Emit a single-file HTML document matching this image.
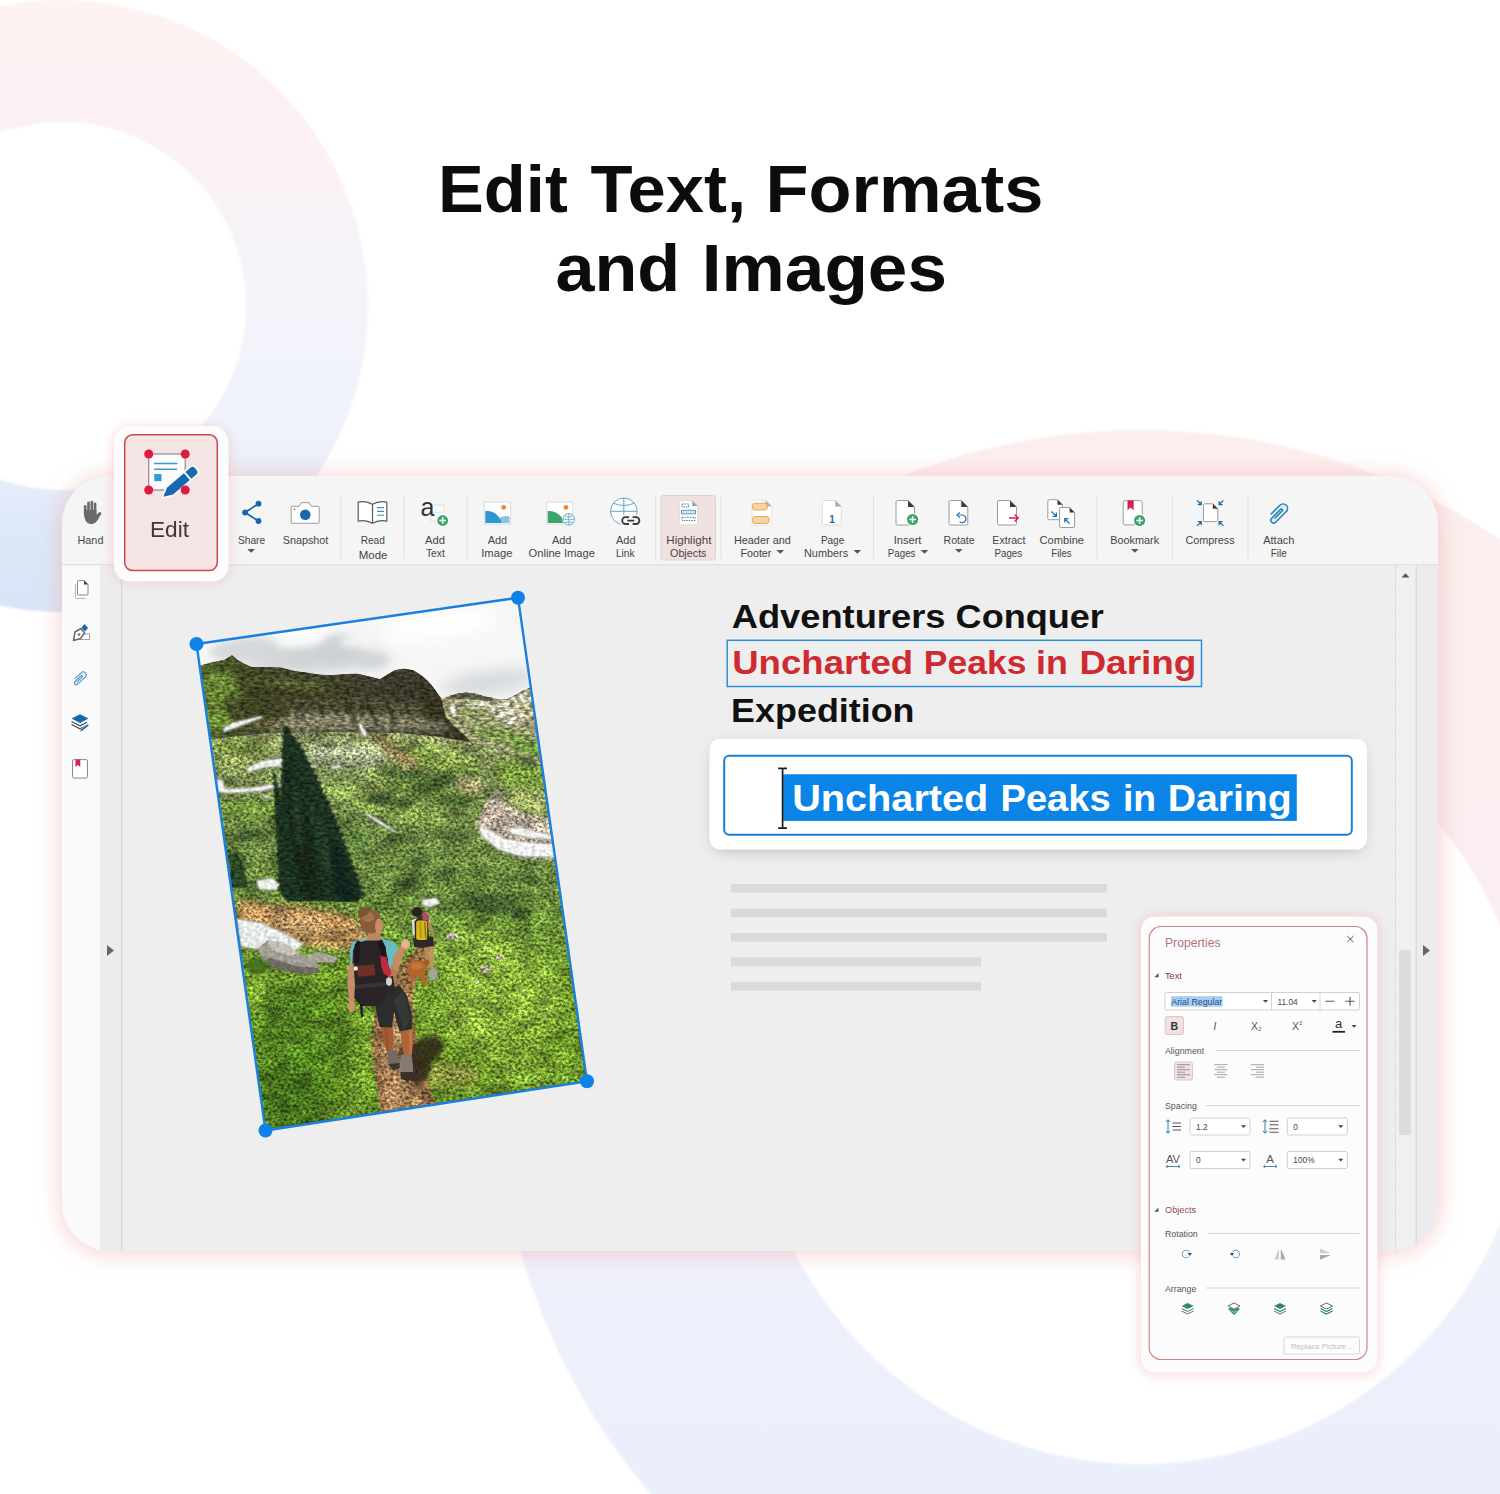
<!DOCTYPE html>
<html lang="en"><head><meta charset="utf-8"><title>Edit Text, Formats and Images</title>
<style>html,body{margin:0;padding:0;background:#fff;}body{width:1500px;height:1494px;overflow:hidden;font-family:"Liberation Sans",sans-serif;}svg{display:block;}</style></head>
<body>
<svg width="1500" height="1494" viewBox="0 0 1500 1494" font-family='"Liberation Sans", sans-serif'>

<defs>
<linearGradient id="ring1" x1="0" y1="0" x2="0" y2="1">
 <stop offset="0" stop-color="#fef2f2"/><stop offset="0.25" stop-color="#fbf1f3"/><stop offset="0.45" stop-color="#f4f4fa"/><stop offset="0.7" stop-color="#f0f3fb"/><stop offset="0.8" stop-color="#e4ecf9"/><stop offset="0.88" stop-color="#dce7f8"/><stop offset="1" stop-color="#d8e5f7"/>
</linearGradient>
<linearGradient id="ring2" x1="0" y1="0" x2="0" y2="1">
 <stop offset="0" stop-color="#fdeeee"/><stop offset="0.45" stop-color="#f9eef1"/><stop offset="0.62" stop-color="#eef1fa"/><stop offset="1" stop-color="#e8eefb"/>
</linearGradient>
<filter id="blur3" x="-10%" y="-10%" width="120%" height="120%"><feGaussianBlur stdDeviation="3"/></filter>
<filter id="blur1" x="-10%" y="-10%" width="120%" height="120%"><feGaussianBlur stdDeviation="1.2"/></filter>
<filter id="glow" x="-10%" y="-10%" width="120%" height="120%"><feGaussianBlur stdDeviation="11"/></filter>
<filter id="glow2" x="-20%" y="-20%" width="140%" height="140%"><feGaussianBlur stdDeviation="6"/></filter>
<filter id="cardsh" x="-10%" y="-30%" width="120%" height="160%"><feGaussianBlur stdDeviation="7"/></filter>
<clipPath id="winclip"><rect x="62" y="476" width="1376" height="775" rx="48"/></clipPath>
</defs>
<rect x="0" y="0" width="1500" height="1494" fill="#ffffff"/>
<path filter="url(#blur1)" fill="url(#ring1)" fill-rule="evenodd" d="M62 0 a306 306 0 1 0 0.01 0 Z M62 122 a184 184 0 1 1 -0.01 0 Z"/>
<path filter="url(#blur1)" fill="url(#ring2)" fill-rule="evenodd" d="M1141 430 a645 645 0 1 0 0.01 0 Z M1141 686 a389 389 0 1 1 -0.01 0 Z"/>
<text y="212" font-size="67" font-weight="bold" fill="#0c0c0c" xml:space="preserve"><tspan x="438.0" textLength="129.82" lengthAdjust="spacingAndGlyphs">Edit</tspan> <tspan x="590.6" textLength="155.51" lengthAdjust="spacingAndGlyphs">Text,</tspan> <tspan x="765.5" textLength="277.88" lengthAdjust="spacingAndGlyphs">Formats</tspan></text>
<text y="290.8" font-size="67" font-weight="bold" fill="#0c0c0c" xml:space="preserve"><tspan x="555.45" textLength="124.66" lengthAdjust="spacingAndGlyphs">and</tspan> <tspan x="701.85" textLength="245.15" lengthAdjust="spacingAndGlyphs">Images</tspan></text>
<rect x="60" y="476" width="1380" height="778" rx="50" fill="#f2a8a8" opacity="0.52" filter="url(#glow)"/>
<g clip-path="url(#winclip)">
<rect x="62" y="476" width="1376" height="775" fill="#eeeeee"/>
<rect x="62" y="476" width="1376" height="88" fill="#f5f5f5"/>
<rect x="62" y="564" width="1376" height="1.5" fill="#e2e2e2"/>
<rect x="62" y="565.5" width="39" height="700" fill="#fafafa"/>
<rect x="101" y="565.5" width="20" height="700" fill="#ececef"/>
<rect x="100.5" y="565.5" width="1" height="700" fill="#e4e4e8"/>
<rect x="121" y="565.5" width="1.2" height="700" fill="#d6d6da"/>
<rect x="1396" y="565.5" width="20" height="700" fill="#f0f0f0"/>
<line x1="1395.5" y1="566" x2="1395.5" y2="1251" stroke="#cfcfcf" stroke-width="1" stroke-dasharray="1.5 1.5"/>
<rect x="1416" y="565.5" width="22" height="700" fill="#ececef"/>
<rect x="1415.5" y="565.5" width="1.2" height="700" fill="#d9d9dc"/>
<rect x="1399" y="950" width="12" height="185" fill="#dcdcdc" rx="2"/>
<path d="M1401.500 577.500 l4 -4.200 l4 4.200 z" fill="#555"/>
<path d="M107 945 l7 5.5 l-7 5.5 z" fill="#666"/>
<path d="M1423 945 l7 5.5 l-7 5.5 z" fill="#666"/>
</g>
<text y="627.7" font-size="33" font-weight="bold" fill="#111111" xml:space="preserve"><tspan x="731.7" textLength="213.79" lengthAdjust="spacingAndGlyphs">Adventurers</tspan> <tspan x="955.61" textLength="148.22" lengthAdjust="spacingAndGlyphs">Conquer</tspan></text>
<rect x="727.2" y="640.3" width="474.3" height="46.2" fill="#eeeeee" stroke="#2b8fd6" stroke-width="1.5"/>
<text y="674.4" font-size="33" font-weight="bold" fill="#cf2a30" xml:space="preserve"><tspan x="732.19" textLength="180.9" lengthAdjust="spacingAndGlyphs">Uncharted</tspan> <tspan x="923.85" textLength="102.61" lengthAdjust="spacingAndGlyphs">Peaks</tspan> <tspan x="1036.13" textLength="31.83" lengthAdjust="spacingAndGlyphs">in</tspan> <tspan x="1079.46" textLength="116.95" lengthAdjust="spacingAndGlyphs">Daring</tspan></text>
<text y="721.8" font-size="33" font-weight="bold" fill="#111111" xml:space="preserve"><tspan x="731.12" textLength="183.43" lengthAdjust="spacingAndGlyphs">Expedition</tspan></text>
<rect x="712" y="744" width="652" height="108" rx="10" fill="#9a9a9a" opacity="0.5" filter="url(#cardsh)"/>
<rect x="709.5" y="739" width="657.5" height="110.5" fill="#ffffff" rx="10"/>
<rect x="724.2" y="755.7" width="627.6" height="79" fill="#ffffff" rx="5" stroke="#1b7fd3" stroke-width="2"/>
<rect x="783.2" y="774.3" width="513.6" height="46.6" fill="#0a84e6"/>
<text y="810.5" font-size="37" font-weight="bold" fill="#ffffff" xml:space="preserve"><tspan x="792.16" textLength="196.16" lengthAdjust="spacingAndGlyphs">Uncharted</tspan> <tspan x="1000.54" textLength="110.15" lengthAdjust="spacingAndGlyphs">Peaks</tspan> <tspan x="1122.98" textLength="33.13" lengthAdjust="spacingAndGlyphs">in</tspan> <tspan x="1167.68" textLength="124.01" lengthAdjust="spacingAndGlyphs">Daring</tspan></text>
<path d="M778.200 768.300 h3.400 q1 0 1 1 q0 -1 1 -1 h3.400 M782.600 769 v58.500 M778.200 828.200 h3.400 q1 0 1 -1 q0 1 1 1 h3.400" fill="none" stroke="#1a1a1a" stroke-width="1.700"/>
<rect x="731" y="884" width="376" height="8.6" fill="#dadada"/>
<rect x="731" y="908.5" width="376" height="8.6" fill="#dadada"/>
<rect x="731" y="933" width="376" height="8.6" fill="#dadada"/>
<rect x="731" y="957.5" width="250" height="8.6" fill="#dadada"/>
<rect x="731" y="982" width="250" height="8.6" fill="#dadada"/>
<path d="M75.500 584 v13.500 q0 1 1 1 h9" fill="none" stroke="#b5b5b5" stroke-width="1"/><path d="M78.500 580.500 h5.500 l4 4 v9.500 q0 1 -1 1 h-8.500 q-1 0 -1 -1 v-12.500 q0 -1 1 -1 z" fill="#fff" stroke="#8a8a8a" stroke-width="1"/><path d="M84 580.500 l4 4 h-4 z" fill="#3a3a3a"/>
<rect x="79.500" y="634" width="10" height="5.500" fill="#fff" stroke="#9a9a9a" stroke-width="0.900"/><path d="M73.500 640.500 l1.500 -8.500 l6 -3.500 l3.500 4.500 l-4 5.500 z" fill="#fff" stroke="#6a6a6a" stroke-width="1.500" stroke-linejoin="round"/><circle cx="79" cy="634.500" r="1.300" fill="#6a6a6a"/><path d="M81.500 627.500 l3 -3.500 l3.500 4 l-3 3.500 z" fill="#1767b0"/>
<g transform="translate(80 678) rotate(48)"><path d="M-3 4 v-8.500 a3 3 0 0 1 6 0 v10.500 a1.900 1.900 0 0 1 -3.800 0 v-8.500 a0.700 0.700 0 0 1 1.500 0 v7" fill="#eaf4fb" stroke="#4a8fbf" stroke-width="1" stroke-linecap="round"/></g>
<path d="M71.500 724.500 l8.500 4.300 l7 -3.600" fill="none" stroke="#4a4a4a" stroke-width="1.100"/><path d="M71.500 721.500 l8.500 4.300 l7 -3.600" fill="none" stroke="#4a4a4a" stroke-width="1.100"/><path d="M71.500 718.600 l8.500 -4.300 l8.500 4.300 l-8.500 4.300 z" fill="#1767b0"/><path d="M80.500 729.500 l7 -5.500 l1.600 1.600 l-7 5.500 l-2.400 0.500 z" fill="#1767b0" stroke="#fafafa" stroke-width="0.600"/>
<rect x="72.500" y="759.600" width="15" height="18.500" rx="1.500" fill="#fff" stroke="#8a8a8a" stroke-width="1"/><path d="M75.500 759.600 h4.800 v7.500 l-2.400 -2 l-2.400 2 z" fill="#d8224e"/>
<defs>
<clipPath id="pclip"><polygon points="196.5,644 518,597.7 587,1081.3 265.5,1130.5"/></clipPath>
<filter id="pb1" x="-30%" y="-30%" width="160%" height="160%"><feGaussianBlur stdDeviation="1"/></filter>
<filter id="pb2" x="-30%" y="-30%" width="160%" height="160%"><feGaussianBlur stdDeviation="2"/></filter>
<filter id="pb3" x="-40%" y="-40%" width="180%" height="180%"><feGaussianBlur stdDeviation="3.500"/></filter>
<filter id="pb8" x="-50%" y="-50%" width="200%" height="200%"><feGaussianBlur stdDeviation="8"/></filter>
<filter id="grain" x="0" y="0" width="100%" height="100%" color-interpolation-filters="sRGB">
<feTurbulence type="fractalNoise" baseFrequency="0.320 0.380" numOctaves="3" seed="7" result="t1"/>
<feColorMatrix in="t1" type="matrix" values="1.900 0.200 0 0 -0.520  1.700 0 0 0 -0.350  1.600 0 0.100 0 -0.350  0 0 0 0 1" result="n1"/>
<feTurbulence type="fractalNoise" baseFrequency="0.045 0.070" numOctaves="3" seed="31" result="t2"/>
<feColorMatrix in="t2" type="matrix" values="1.600 0 0 0 -0.300  1.600 0 0 0 -0.300  1.600 0 0 0 -0.300  0 0 0 0 1" result="n2"/>
<feComposite in="SourceGraphic" in2="n1" operator="arithmetic" k1="1" k2="0.500" k3="0" k4="0" result="c1"/>
<feComposite in="c1" in2="n2" operator="arithmetic" k1="0.500" k2="0.750" k3="0" k4="0" result="c2"/>
<feComposite in="c2" in2="SourceGraphic" operator="in"/>
</filter>
<filter id="grain2" x="0" y="0" width="100%" height="100%" color-interpolation-filters="sRGB">
<feTurbulence type="fractalNoise" baseFrequency="0.200 0.400" numOctaves="3" seed="3" result="t1"/>
<feColorMatrix in="t1" type="matrix" values="1.800 0 0 0 -0.400  1.800 0 0 0 -0.400  1.800 0 0 0 -0.400  0 0 0 0 1" result="n1"/>
<feComposite in="SourceGraphic" in2="n1" operator="arithmetic" k1="0.900" k2="0.550" k3="0" k4="0" result="c1"/>
<feComposite in="c1" in2="SourceGraphic" operator="in"/>
</filter>
<filter id="grain3" x="0" y="0" width="100%" height="100%" color-interpolation-filters="sRGB">
<feTurbulence type="fractalNoise" baseFrequency="0.250 0.300" numOctaves="2" seed="13" result="t1"/>
<feColorMatrix in="t1" type="matrix" values="1 0 0 0 -0.100  1 0 0 0 -0.100  1 0 0 0 -0.100  0 0 0 0 1" result="n1"/>
<feComposite in="SourceGraphic" in2="n1" operator="arithmetic" k1="0.450" k2="0.820" k3="0" k4="0" result="c1"/>
<feComposite in="c1" in2="SourceGraphic" operator="in"/>
</filter>
<linearGradient id="gmead" x1="0" y1="0" x2="0" y2="1"><stop offset="0" stop-color="#86945e"/><stop offset="0.200" stop-color="#6a8446"/><stop offset="0.420" stop-color="#65883c"/><stop offset="0.600" stop-color="#6f9a30"/><stop offset="1" stop-color="#628c28"/></linearGradient>
<linearGradient id="grock" x1="0" y1="0" x2="1" y2="0"><stop offset="0" stop-color="#566c30"/><stop offset="0.200" stop-color="#424728"/><stop offset="0.600" stop-color="#403e2d"/><stop offset="1" stop-color="#383527"/></linearGradient>
</defs>
<g clip-path="url(#pclip)">
<rect x="190" y="590" width="410" height="160" fill="#f6f6f6"/>
<ellipse cx="300" cy="662" rx="60" ry="12" fill="#d3d6d8" opacity="0.9" filter="url(#pb8)" transform="rotate(-8 300 662)"/>
<ellipse cx="250" cy="650" rx="40" ry="9" fill="#e2e3e4" filter="url(#pb3)" transform="rotate(-8 250 650)"/>
<ellipse cx="340" cy="648" rx="22" ry="14" fill="#d0d4d7" opacity="0.9" filter="url(#pb3)"/>
<ellipse cx="372" cy="660" rx="18" ry="8" fill="#d6d9db" opacity="0.9" filter="url(#pb3)"/>
<ellipse cx="490" cy="682" rx="50" ry="10" fill="#d2d5d8" filter="url(#pb8)" transform="rotate(-8 490 682)"/>
<ellipse cx="440" cy="625" rx="60" ry="14" fill="#ffffff" filter="url(#pb8)" transform="rotate(-8 440 625)"/>
<ellipse cx="300" cy="632" rx="30" ry="7" fill="#ffffff" filter="url(#pb3)" transform="rotate(-8 300 632)"/>
<ellipse cx="310" cy="656" rx="80" ry="10" fill="#cbcfd2" opacity="0.9" filter="url(#pb8)" transform="rotate(3 310 656)"/>
<ellipse cx="240" cy="648" rx="30" ry="8" fill="#d5d8da" opacity="0.9" filter="url(#pb3)" transform="rotate(-6 240 648)"/>
<ellipse cx="300" cy="640" rx="26" ry="6" fill="#fbfbfb" opacity="0.9" filter="url(#pb3)" transform="rotate(-8 300 640)"/>
<ellipse cx="360" cy="640" rx="20" ry="7" fill="#f4f4f4" opacity="0.9" filter="url(#pb3)" transform="rotate(-8 360 640)"/>
<g filter="url(#grain2)">
<polygon points="438,700 449,696 458,693.5 466,692.5 475,693.5 485,696.5 494,698 500,699.5 507,699 515,695 522,691 530,687.5 545,684 545,770 460,760 438,715" fill="#9d9b76"/>
<polygon points="449,696 458,693.5 466,692.5 475,693.5 485,696.5 494,698 490,701 470,699 455,699" fill="#5c5b48"/>
<ellipse cx="470" cy="712" rx="16" ry="9" fill="#8c9460" opacity="0.9" filter="url(#pb3)"/>
<ellipse cx="520" cy="712" rx="18" ry="10" fill="#b9b38c" opacity="0.9" filter="url(#pb3)"/>
<ellipse cx="500" cy="735" rx="30" ry="8" fill="#7f9a50" filter="url(#pb3)" transform="rotate(10 500 735)"/>
<ellipse cx="530" cy="748" rx="20" ry="8" fill="#6f9840" filter="url(#pb3)" transform="rotate(10 530 748)"/>
<polygon points="451,707 456,705 458,713 453,716" fill="#eef0ea" filter="url(#pb1)"/>
<polygon points="466,703 490,702 492,705 472,707" fill="#eef0ea" filter="url(#pb1)"/>
<polygon points="489,710 508,701 511,703 493,713" fill="#eef0ea" filter="url(#pb1)"/>
<polygon points="497,716 516,706 518,708 500,719" fill="#eef0ea" filter="url(#pb1)"/>
<polygon points="512,700 526,692 528,694 515,702" fill="#eef0ea" filter="url(#pb1)"/>
<polygon points="505,722 522,713 524,715 508,725" fill="#eef0ea" filter="url(#pb1)"/>
<polygon points="520,703 531,697 532,700 522,706" fill="#eef0ea" filter="url(#pb1)"/>
<polygon points="190,668 201.5,665 213,662 225,659.5 232,655 238,660 245,664 252,667 265,667 281,667.5 295,671 307,672.5 320,674.5 332,675 345,674 357,673.5 368,676 380,679 388,674 395,670 404,668.5 413,670 421,675 428,681 434,688 441,698 446,717 455,727 468,738 470,742 440,737 400,733 330,732 270,733 230,737 190,742" fill="url(#grock)"/>
<ellipse cx="222" cy="690" rx="22" ry="18" fill="#6d8c38" opacity="0.95" filter="url(#pb3)"/>
<ellipse cx="215" cy="720" rx="18" ry="10" fill="#76983c" opacity="0.9" filter="url(#pb3)"/>
<ellipse cx="262" cy="683" rx="30" ry="9" fill="#4a4e2c" opacity="0.9" filter="url(#pb3)" transform="rotate(5 262 683)"/>
<ellipse cx="300" cy="686" rx="30" ry="5" fill="#6a7438" opacity="0.7" filter="url(#pb3)" transform="rotate(6 300 686)"/>
<ellipse cx="330" cy="702" rx="50" ry="5" fill="#77745a" opacity="0.7" filter="url(#pb3)" transform="rotate(3 330 702)"/>
<ellipse cx="360" cy="718" rx="60" ry="5" fill="#827d64" opacity="0.75" filter="url(#pb3)" transform="rotate(2 360 718)"/>
<ellipse cx="410" cy="690" rx="18" ry="14" fill="#3b392a" opacity="0.85" filter="url(#pb3)"/>
<ellipse cx="400" cy="710" rx="30" ry="5" fill="#64614a" opacity="0.7" filter="url(#pb3)"/>
<ellipse cx="290" cy="725" rx="50" ry="4" fill="#8a7e58" opacity="0.7" filter="url(#pb3)"/>
<ellipse cx="440" cy="725" rx="14" ry="6" fill="#4a4434" opacity="0.9" filter="url(#pb3)" transform="rotate(35 440 725)"/>
<polygon points="292,711 340,712 400,714 436,718 448,731 400,731 300,731 270,729" fill="#8a866c" filter="url(#pb3)" opacity="0.800"/>
<polygon points="300,700 350,701 420,704 432,710 380,709 320,707" fill="#6a6750" filter="url(#pb3)" opacity="0.700"/>
<ellipse cx="300" cy="695" rx="70" ry="5" fill="#35341f" opacity="0.7" filter="url(#pb3)" transform="rotate(4 300 695)"/>
<ellipse cx="350" cy="708" rx="60" ry="4" fill="#33301f" opacity="0.7" filter="url(#pb3)" transform="rotate(3 350 708)"/>
<ellipse cx="250" cy="705" rx="30" ry="8" fill="#3c4224" opacity="0.7" filter="url(#pb3)" transform="rotate(8 250 705)"/>
<ellipse cx="430" cy="708" rx="10" ry="14" fill="#35321f" opacity="0.8" filter="url(#pb3)" transform="rotate(-20 430 708)"/>
<path d="M345 698 L357 724" stroke="#24221a" stroke-width="2.6" opacity="0.850" filter="url(#pb1)"/>
<path d="M366 700 L378 727" stroke="#24221a" stroke-width="2.6" opacity="0.850" filter="url(#pb1)"/>
<path d="M386 702 L397 726" stroke="#24221a" stroke-width="2.2" opacity="0.850" filter="url(#pb1)"/>
<path d="M318 703 L324 718" stroke="#24221a" stroke-width="1.8" opacity="0.850" filter="url(#pb1)"/>
<path d="M226 700 L232 716" stroke="#24221a" stroke-width="1.8" opacity="0.850" filter="url(#pb1)"/>
<path d="M240 678 L262 672" stroke="#24221a" stroke-width="1.5" opacity="0.850" filter="url(#pb1)"/>
<path d="M405 704 L414 722" stroke="#24221a" stroke-width="1.8" opacity="0.850" filter="url(#pb1)"/>
<path d="M300 706 L305 720" stroke="#24221a" stroke-width="1.5" opacity="0.850" filter="url(#pb1)"/>
</g>
<g filter="url(#grain)">
<polygon points="190,742 230,737 270,733 330,732 400,733 440,737 470,742 500,750 545,768 600,1000 600,1140 190,1140" fill="url(#gmead)"/>
<ellipse cx="345" cy="755" rx="42" ry="13" fill="#a9b793" opacity="0.9" filter="url(#pb3)" transform="rotate(4 345 755)"/>
<ellipse cx="392" cy="750" rx="24" ry="5" fill="#8a7350" opacity="0.9" filter="url(#pb3)" transform="rotate(38 392 750)"/>
<ellipse cx="240" cy="748" rx="30" ry="9" fill="#7d9a46" opacity="0.9" filter="url(#pb3)"/>
<ellipse cx="235" cy="765" rx="26" ry="8" fill="#93a860" opacity="0.8" filter="url(#pb3)"/>
<ellipse cx="440" cy="760" rx="40" ry="12" fill="#7c9c44" opacity="0.9" filter="url(#pb3)" transform="rotate(14 440 760)"/>
<ellipse cx="420" cy="790" rx="50" ry="12" fill="#6c8a40" opacity="0.8" filter="url(#pb3)" transform="rotate(18 420 790)"/>
<ellipse cx="520" cy="775" rx="26" ry="14" fill="#7aa040" opacity="0.9" filter="url(#pb3)" transform="rotate(14 520 775)"/>
<ellipse cx="400" cy="812" rx="50" ry="10" fill="#86a84e" opacity="0.8" filter="url(#pb3)" transform="rotate(14 400 812)"/>
<ellipse cx="330" cy="790" rx="30" ry="8" fill="#8eaa58" opacity="0.8" filter="url(#pb3)"/>
<ellipse cx="250" cy="810" rx="30" ry="10" fill="#6a9238" opacity="0.8" filter="url(#pb3)"/>
<ellipse cx="405" cy="775" rx="16" ry="5" fill="#38552a" opacity="0.7" filter="url(#pb2)"/>
<ellipse cx="430" cy="785" rx="20" ry="6" fill="#38552a" opacity="0.7" filter="url(#pb2)"/>
<ellipse cx="380" cy="800" rx="14" ry="5" fill="#38552a" opacity="0.7" filter="url(#pb2)"/>
<ellipse cx="455" cy="800" rx="18" ry="6" fill="#38552a" opacity="0.7" filter="url(#pb2)"/>
<ellipse cx="470" cy="775" rx="10" ry="4" fill="#38552a" opacity="0.7" filter="url(#pb2)"/>
<ellipse cx="250" cy="835" rx="14" ry="6" fill="#38552a" opacity="0.7" filter="url(#pb2)"/>
<ellipse cx="232" cy="860" rx="12" ry="10" fill="#38552a" opacity="0.7" filter="url(#pb2)"/>
<ellipse cx="395" cy="840" rx="10" ry="5" fill="#38552a" opacity="0.7" filter="url(#pb2)"/>
<ellipse cx="420" cy="862" rx="12" ry="6" fill="#38552a" opacity="0.7" filter="url(#pb2)"/>
<ellipse cx="495" cy="905" rx="22" ry="10" fill="#38552a" opacity="0.7" filter="url(#pb2)"/>
<ellipse cx="470" cy="898" rx="10" ry="6" fill="#38552a" opacity="0.7" filter="url(#pb2)"/>
<ellipse cx="520" cy="915" rx="10" ry="6" fill="#38552a" opacity="0.7" filter="url(#pb2)"/>
<ellipse cx="400" cy="885" rx="10" ry="8" fill="#38552a" opacity="0.7" filter="url(#pb2)"/>
<ellipse cx="445" cy="870" rx="12" ry="5" fill="#38552a" opacity="0.7" filter="url(#pb2)"/>
<ellipse cx="530" cy="880" rx="10" ry="5" fill="#38552a" opacity="0.7" filter="url(#pb2)"/>
<ellipse cx="330" cy="745" rx="6" ry="3" fill="#38552a" opacity="0.7" filter="url(#pb2)"/>
<ellipse cx="300" cy="790" rx="10" ry="4" fill="#38552a" opacity="0.7" filter="url(#pb2)"/>
<polygon points="497,788 504,800 520,811 540,816 560,818 562,860 520,858 490,843 477,826 484,806" fill="#b6ae9c" filter="url(#pb2)"/>
<ellipse cx="530" cy="800" rx="26" ry="10" fill="#9fae68" opacity="0.9" filter="url(#pb3)" transform="rotate(12 530 800)"/>
<ellipse cx="407" cy="760" rx="14" ry="6" fill="#a08a60" opacity="0.85" filter="url(#pb3)" transform="rotate(32 407 760)"/>
<ellipse cx="470" cy="785" rx="13" ry="7" fill="#a59572" opacity="0.8" filter="url(#pb3)" transform="rotate(10 470 785)"/>
<ellipse cx="445" cy="752" rx="30" ry="6" fill="#8fa85a" opacity="0.8" filter="url(#pb3)" transform="rotate(16 445 752)"/>
<ellipse cx="390" cy="802" rx="24" ry="5" fill="#33492a" opacity="0.65" filter="url(#pb2)" transform="rotate(8 390 802)"/>
<ellipse cx="435" cy="776" rx="22" ry="7" fill="#3a4f2c" opacity="0.55" filter="url(#pb2)" transform="rotate(12 435 776)"/>
<ellipse cx="525" cy="762" rx="13" ry="5" fill="#3a4f2c" opacity="0.6" filter="url(#pb2)" transform="rotate(8 525 762)"/>
<ellipse cx="490" cy="904" rx="24" ry="9" fill="#3a512a" opacity="0.55" filter="url(#pb2)" transform="rotate(4 490 904)"/>
<ellipse cx="410" cy="886" rx="10" ry="9" fill="#3a512a" opacity="0.55" filter="url(#pb2)"/>
<ellipse cx="350" cy="842" rx="18" ry="10" fill="#55803a" opacity="0.6" filter="url(#pb3)"/>
<polygon points="236,900 300,906 350,915 372,935 356,950 310,946 270,942 240,930" fill="#b08c58" filter="url(#pb3)"/>
<ellipse cx="300" cy="925" rx="30" ry="8" fill="#b39868" opacity="0.8" filter="url(#pb3)" transform="rotate(8 300 925)"/>
<polygon points="384,1120 376,1080 372,1040 376,1010 388,985 402,965 416,950 428,940 434,944 424,958 416,975 412,1000 414,1030 420,1060 430,1090 436,1110" fill="#8c6c46" filter="url(#pb1)"/>
<polygon points="386,1110 382,1070 382,1040 388,1015 398,1000 406,1010 404,1040 410,1070 420,1100" fill="#a58258" filter="url(#pb2)"/>
<ellipse cx="300" cy="1040" rx="50" ry="60" fill="#4f7e22" opacity="0.9" filter="url(#pb8)"/>
<ellipse cx="290" cy="1100" rx="40" ry="30" fill="#416e1c" opacity="0.85" filter="url(#pb8)"/>
<ellipse cx="500" cy="1000" rx="60" ry="50" fill="#86ae3e" opacity="0.9" filter="url(#pb8)"/>
<ellipse cx="480" cy="950" rx="50" ry="20" fill="#88b042" opacity="0.8" filter="url(#pb8)"/>
<ellipse cx="520" cy="1060" rx="40" ry="25" fill="#78a234" opacity="0.8" filter="url(#pb8)"/>
<ellipse cx="330" cy="985" rx="20" ry="14" fill="#5f8a28" opacity="0.8" filter="url(#pb3)"/>
<ellipse cx="450" cy="1075" rx="30" ry="12" fill="#9c8a52" opacity="0.5" filter="url(#pb3)"/>
<polygon points="384,1125 376,1080 372,1040 376,1010 388,985 402,965 416,950 428,940 434,944 424,958 416,975 412,1000 414,1030 420,1060 430,1090 438,1115" fill="#8c6c46" filter="url(#pb1)"/>
<polygon points="388,1115 382,1070 382,1040 388,1015 398,1000 406,1010 404,1040 410,1070 422,1105" fill="#a5845a" filter="url(#pb2)"/>
<polygon points="445,934 452,932 459,935 456,940 447,939" fill="#aaa69c"/>
<polygon points="480,968 486,965 491,968 488,973 481,972" fill="#aaa69c"/>
<polygon points="496,956 503,955 504,959 497,960" fill="#aaa69c"/>
<polygon points="474,980 478,979 479,983 475,984" fill="#aaa69c"/>
</g>
<g filter="url(#grain3)">
<polygon points="478,826 490,829 505,838 530,842 556,843 556,858 520,857 497,850 480,835" fill="#f1f2ef" filter="url(#pb1)"/>
<polygon points="504,828 520,826 540,832 556,834 556,841 530,839 512,835" fill="#eceee9" filter="url(#pb1)"/>
<polygon points="222,728 232,722 262,715 264,718 240,727 224,733" fill="#eef0ec" filter="url(#pb1)"/>
<polygon points="245,768 262,760 284,757 300,762 318,765 318,768 290,767 266,768 248,773" fill="#eef0ec" filter="url(#pb1)"/>
<polygon points="214,779 222,778 226,788 252,787 280,782 288,784 262,792 230,794 216,793" fill="#eef0ec" filter="url(#pb1)"/>
<polygon points="357,723 361,722 367,732 368,738 362,736" fill="#eef0ec" filter="url(#pb1)"/>
<polygon points="330,766 340,764 342,768 332,770" fill="#eef0ec" filter="url(#pb1)"/>
<polygon points="366,812 380,820 398,832 396,834 378,824 365,815" fill="#eef0ec" filter="url(#pb1)"/>
<polygon points="421,899 437,897 441,904 430,908 422,906" fill="#eef0ec" filter="url(#pb1)"/>
<polygon points="438,741 448,745 447,747 437,743" fill="#eef0ec" filter="url(#pb1)"/>
<polygon points="256,880 272,877 281,885 276,891 258,890" fill="#eef0ec" filter="url(#pb1)"/>
<polygon points="262,795 270,794 271,798 263,799" fill="#eef0ec" filter="url(#pb1)"/>
<polygon points="236,918 262,922 290,935 305,944 296,951 262,951 240,947" fill="#e6eae8" filter="url(#pb1)"/>
<polygon points="258,948 268,940 284,943 300,953 318,964 320,973 300,974 280,970 262,962" fill="#a39e94"/>
<polygon points="268,940 284,943 300,953 290,956 272,950" fill="#c4c0b6"/>
<polygon points="262,962 280,970 300,974 320,973 318,968 296,966 270,958" fill="#6f6a60"/>
<polygon points="305,954 322,952 338,958 334,963 312,962" fill="#aaa69a"/>
<ellipse cx="257" cy="966" rx="12" ry="9" fill="#4e7e22" opacity="0.9" filter="url(#pb2)"/>
</g>
<g filter="url(#grain2)">
<polygon points="236,850 241,862 246,876 248,888 228,888 230,872" fill="#2b4628" filter="url(#pb1)"/>
<polygon points="273.5,771 277.3,777.5 275.3,780.4 279.3,784.0 277.2,786.9 281.2,790.5 279.0,793.4 283.0,797.0 280.7,799.9 285.6,803.5 282.3,806.4 286.9,810.0 283.8,812.9 287.7,816.5 285.3,819.4 289.5,823.0 286.8,825.9 291.9,829.5 288.2,832.4 292.8,836.0 289.6,838.9 294.7,842.5 291.0,845.4 296.8,849.0 292.3,851.9 299.1,855.5 293.7,858.4 300.6,862.0 295.0,864.9 300.1,868.5 296.3,871.4 303.1,875.0 297.6,877.9 305.1,881.5 298.9,884.4 306.2,888.0 300.2,890.9 296.2,892 285.7,891 281.7,890.9 276.4,888.0 281.2,884.4 276.8,881.5 280.8,877.9 274.7,875.0 280.3,871.4 277.4,868.5 279.8,864.9 274.9,862.0 279.4,858.4 274.2,855.5 278.9,851.9 276.2,849.0 278.5,845.4 275.5,842.5 278.0,838.9 275.0,836.0 277.6,832.4 273.5,829.5 277.1,825.9 274.8,823.0 276.7,819.4 272.8,816.5 276.3,812.9 273.6,810.0 275.9,806.4 273.3,803.5 275.5,799.9 272.6,797.0 275.2,793.4 272.7,790.5 274.8,786.9 271.8,784.0 274.6,780.4 272.3,777.5" fill="#1f3522" filter="url(#pb1)"/>
<polygon points="284,724.5 292.1,731.0 290.4,733.9 297.0,737.5 295.1,740.4 301.6,744.0 299.3,746.9 306.0,750.5 303.0,753.4 308.8,757.0 306.6,759.9 312.3,763.5 309.9,766.4 315.3,770.0 313.1,772.9 319.9,776.5 316.2,779.4 322.8,783.0 319.2,785.9 324.6,789.5 322.1,792.4 328.4,796.0 324.9,798.9 331.8,802.5 327.6,805.4 332.9,809.0 330.4,811.9 337.0,815.5 333.0,818.4 338.5,822.0 335.6,824.9 340.9,828.5 338.2,831.4 345.5,835.0 340.7,837.9 346.6,841.5 343.2,844.4 349.9,848.0 345.6,850.9 353.3,854.5 348.0,857.4 354.5,861.0 350.4,863.9 357.0,867.5 352.8,870.4 359.0,874.0 355.1,876.9 360.6,880.5 357.4,883.4 364.9,887.0 359.7,889.9 367.0,893.5 362.0,896.4 358.0,902 287.0,901 283.0,896.4 278.9,893.5 282.9,889.9 279.7,887.0 282.8,883.4 277.2,880.5 282.8,876.9 279.3,874.0 282.7,870.4 278.0,867.5 282.7,863.9 278.3,861.0 282.6,857.4 277.3,854.5 282.6,850.9 277.3,848.0 282.6,844.4 278.4,841.5 282.5,837.9 277.5,835.0 282.5,831.4 278.8,828.5 282.5,824.9 278.8,822.0 282.5,818.4 278.7,815.5 282.5,811.9 278.2,809.0 282.5,805.4 278.6,802.5 282.5,798.9 279.7,796.0 282.6,792.4 278.8,789.5 282.6,785.9 279.0,783.0 282.7,779.4 280.2,776.5 282.8,772.9 280.5,770.0 282.9,766.4 280.1,763.5 283.0,759.9 280.0,757.0 283.2,753.4 280.1,750.5 283.4,746.9 281.5,744.0 283.7,740.4 281.5,737.5 284.1,733.9 282.2,731.0" fill="#1b3020" filter="url(#pb1)"/>
<polygon points="288,760 298,790 308,830 316,870 320,897 303,893 294,850 286,800" fill="#122418" filter="url(#pb2)" opacity="0.800"/>
<polygon points="328,830 343,860 354,890 354,902 338,900 332,870" fill="#10201a" filter="url(#pb2)" opacity="0.800"/>
<polygon points="292,770 300,800 304,840 298,850 292,810" fill="#2e4a30" filter="url(#pb2)" opacity="0.600"/>
<polygon points="312,800 324,830 334,870 328,880 318,840" fill="#2c462e" filter="url(#pb2)" opacity="0.550"/>
</g>
<polygon points="424,946 428.5,945 430,957 429.5,968 426.5,968.5 425,957" fill="#b88a58"/>
<polygon points="429,946 433,945.5 434,957 433.5,968 430.8,968.5 430,957" fill="#c09460"/>
<polygon points="413,938 433,936.5 434,946 422,948 414,947" fill="#2e2826"/>
<polygon points="411.7,920 416,918.5 418,934 413,935" fill="#e4e0dc"/>
<polygon points="414.5,921 419,918.5 427.5,919 429,938 427.5,941 417,941.5 415,938" fill="#2e2a22"/>
<rect x="416.2" y="920.5" width="11" height="19.5" fill="#d9b922" rx="2.5"/>
<polygon points="418.5,922 421.5,921.5 422.5,938 419.5,938.5" fill="#bfa018"/>
<polygon points="424,922 425.5,922 426.5,938 425,938" fill="#8a7414"/>
<polygon points="427.7,921 431,923 434.5,934 433,936 430,930 428.5,927" fill="#b8845c"/>
<polygon points="421,913 426,912.5 429.5,916 429,921 423,920" fill="#b04a6a"/>
<ellipse cx="417" cy="912" rx="5.3" ry="5" fill="#2a2220"/>
<ellipse cx="420" cy="917" rx="2.5" ry="2" fill="#3a2a24"/>
<polygon points="429,969 434,967 438,972 437,979 431,981 428,976" fill="#aaa59a" filter="url(#pb1)"/>
<polygon points="407.6,964 412,961 420,961 425,960.5 428,963 427,968 425,972 425.5,980 426.5,986 423.5,986.5 421.5,979 418,976.5 413.5,976 413.5,983 411.5,983.5 410,977 408,971" fill="#b4642c"/>
<ellipse cx="417" cy="966" rx="6" ry="3.5" fill="#cc7c3a" opacity="0.9" filter="url(#pb1)"/>
<polygon points="424,960.5 428,959.5 430,963 427,966 424,964" fill="#a85824"/>
<polygon points="396,1052 408,1046 424,1037 436,1036 444,1042 442,1052 432,1062 430,1076 420,1084 410,1082 412,1066 402,1062" fill="#2a2416" filter="url(#pb2)" opacity="0.820"/>
<polygon points="380.5,1024 392.5,1025 393.5,1040 393,1052 387,1052.5 383,1040" fill="#a35c34"/>
<polygon points="400,1027 412.5,1026 413,1042 411.5,1056 404,1056.5 401.5,1042" fill="#ad6438"/>
<polygon points="384,1028 387,1028 389,1050 387,1051" fill="#8a4a28" opacity="0.600"/>
<polygon points="409,1030 412,1029 412,1054 409.5,1055" fill="#c88050" opacity="0.700"/>
<polygon points="387,1050.5 395.5,1050 399,1060 399.5,1068 393,1070 388.5,1066 387.5,1058" fill="#746a62"/>
<polygon points="401,1054.5 411.5,1054.5 413,1066 413,1077 408,1081 401,1078 400,1066" fill="#857b72"/>
<polygon points="400.5,1072 413,1072 413,1078 408,1081.5 401,1079" fill="#37312c"/>
<polygon points="388.5,1064 399.5,1063 399.5,1068.5 393,1070.5" fill="#3d3631"/>
<polygon points="374,990 400,986 407,996 411.5,1012 412,1029 399.5,1031.5 394,1012 392,1027.5 379.5,1027 376,1010" fill="#2b2e2c"/>
<polygon points="394,1000 402,992 407,1000 410,1020 404,1030" fill="#3a3e3a" opacity="0.700"/>
<polygon points="350,950 353,942 362,939 374,938.5 386,939.5 395,943 399.5,952 399,961 392,964 388,990 366,992 356,975 350.5,965" fill="#69bcc2"/>
<polygon points="393,958 398,950 402,942 405,939.5 409,941 409.5,946 405,951 401,962 397,972 392,968" fill="#c48c64"/>
<ellipse cx="405.5" cy="944" rx="4.5" ry="4.5" fill="#ddb48c"/>
<polygon points="392,966 397,972 395,984 390,986 388,976" fill="#b87c54"/>
<polygon points="368,932 380,931 381,940 367,940.5" fill="#bc8660"/>
<ellipse cx="370.5" cy="921.5" rx="10.5" ry="12" fill="#8c5c3a"/>
<ellipse cx="379" cy="926" rx="4" ry="7.5" fill="#c48e68"/>
<ellipse cx="368" cy="917" rx="6" ry="5" fill="#a87a52" opacity="0.8"/>
<ellipse cx="363.5" cy="912" rx="6" ry="4.2" fill="#80522f" transform="rotate(-20 363.5 912)"/>
<polygon points="353,950 357,943 366,940.5 378,940.5 385,946 388,960 388.5,985 386,1001 378,1006.5 361,1006 354,998 352,975" fill="#2b2426"/>
<polygon points="354.5,945 357.5,940.5 360.5,941.5 359,962 355,964" fill="#1c1819"/>
<polygon points="377,941 382,939.5 386,948 385,964 380.5,952" fill="#1c1819"/>
<polygon points="356.8,966 374,964.5 375.5,975 358,977" fill="#6e3029"/>
<polygon points="354,985 386,982 386,986 354,989" fill="#3b3436"/>
<ellipse cx="355.6" cy="968.5" rx="2.3" ry="2.3" fill="#efe9e6"/>
<polygon points="380.5,956 386,957 391.5,973 389,977 384,974 381,966" fill="#c22a3c"/>
<polygon points="385,978 393,976 395.5,992 390,996 386,992" fill="#2a282a"/>
<ellipse cx="389" cy="981.5" rx="3" ry="4.2" fill="#cfd6cc"/>
<polygon points="348.5,966 353.5,963 355,985 354,1001 349.5,1003 347.5,988" fill="#c48e68"/>
<ellipse cx="351.5" cy="1006.5" rx="3.6" ry="5.5" fill="#c8946c"/>
<polygon points="360,1004 362.5,1004 363,1017 361,1017" fill="#1a1a1a"/>
</g>
<polygon points="196.5,644 518,597.7 587,1081.3 265.5,1130.5" fill="none" stroke="#1a80dc" stroke-width="2.400" stroke-linejoin="round"/>
<circle cx="196.5" cy="644" r="7" fill="#0d83ea"/>
<circle cx="518" cy="597.7" r="7" fill="#0d83ea"/>
<circle cx="587" cy="1081.3" r="7" fill="#0d83ea"/>
<circle cx="265.5" cy="1130.5" r="7" fill="#0d83ea"/>
<g clip-path="url(#winclip)">
<line x1="341" y1="496" x2="341" y2="559" stroke="#e3e3e3" stroke-width="1.2"/>
<line x1="404" y1="496" x2="404" y2="559" stroke="#e3e3e3" stroke-width="1.2"/>
<line x1="467" y1="496" x2="467" y2="559" stroke="#e3e3e3" stroke-width="1.2"/>
<line x1="655.5" y1="496" x2="655.5" y2="559" stroke="#e3e3e3" stroke-width="1.2"/>
<line x1="721" y1="496" x2="721" y2="559" stroke="#e3e3e3" stroke-width="1.2"/>
<line x1="873.5" y1="496" x2="873.5" y2="559" stroke="#e3e3e3" stroke-width="1.2"/>
<line x1="1097" y1="496" x2="1097" y2="559" stroke="#e3e3e3" stroke-width="1.2"/>
<line x1="1172.5" y1="496" x2="1172.5" y2="559" stroke="#e3e3e3" stroke-width="1.2"/>
<line x1="1248" y1="496" x2="1248" y2="559" stroke="#e3e3e3" stroke-width="1.2"/>
<g fill="#6a6a6a" stroke="none" transform="translate(0.500 -2)"><rect x="83.4" y="507" width="2.6" height="10" rx="1.3"/><rect x="86.7" y="503.6" width="2.6" height="13" rx="1.3"/><rect x="90" y="502.8" width="2.6" height="13" rx="1.3"/><rect x="93.3" y="504.4" width="2.6" height="13" rx="1.3"/><path d="M83.4 512 h12.5 v5 q3 -4 4.6 -2.6 q1 1 -1.4 4 q-2.5 6 -6.5 7.4 q-5 1.2 -7.6 -3.3 q-1.6 -3 -1.6 -7 z"/></g>
<g stroke="#1767b0" stroke-width="1.7" fill="none"><path d="M258.5 503.7 L245.1 512.5 L258.5 521"/></g><g fill="#1767b0"><circle cx="258.5" cy="503.7" r="2.9"/><circle cx="245.1" cy="512.5" r="2.9"/><circle cx="258.5" cy="521" r="2.9"/></g>
<path d="M247.39999999999998 549.0 h7.600 l-3.800 3.800 z" fill="#555"/>
<path d="M292 506.3 h7.2 l2 -3.6 h8 l2 3.6 h7.2 q0.8 0 0.8 0.8 v15.4 q0 0.8 -0.8 0.8 h-26.4 q-0.8 0 -0.8 -0.8 v-15.4 q0 -0.8 0.8 -0.8 z" fill="#fff" stroke="#9a9a9a" stroke-width="1"/><circle cx="305.3" cy="514.8" r="5.3" fill="#1767b0"/><circle cx="294.6" cy="509.2" r="0.9" fill="#888"/>
<path d="M372.5 504.3 q-6 -3.6 -14.3 -2.2 v19 q8.3 -1.4 14.3 2.2 q6 -3.6 14.3 -2.2 v-19 q-8.300 -1.4 -14.3 2.2 z M372.5 504.3 v19" fill="#fff" stroke="#5a5a5a" stroke-width="1.2" stroke-linejoin="round"/><path d="M377 507.6 h7 M377 511.4 h7 M377 515.2 h7" stroke="#3f93b4" stroke-width="1.1"/>
<rect x="431" y="505" width="13" height="16" fill="#fafafa" stroke="#dcdcdc" stroke-width="0.8"/><path d="M433 512.500 h9 M433 516 h9" stroke="#e0e4e8" stroke-width="0.8"/>
<text x="427.5" y="516" font-size="25" fill="#333333" text-anchor="middle">a</text>
<circle cx="442.7" cy="520.5" r="6.4" fill="#fff"/><circle cx="442.7" cy="520.5" r="5.4" fill="#3aa66d"/><path d="M439.4 520.5 h6.6 M442.7 517.2 v6.6" stroke="#fff" stroke-width="1.5" fill="none"/>
<rect x="484.3" y="502" width="26.300" height="22" fill="#fff" stroke="#dcdcdc" stroke-width="1"/><clipPath id="ci1"><rect x="485.3" y="503" width="24.3" height="20"/></clipPath><g clip-path="url(#ci1)"><circle cx="506" cy="527" r="11" fill="#8cc4e4"/><circle cx="487" cy="526" r="15" fill="#2d97cf"/></g><circle cx="503.7" cy="507.3" r="2.400" fill="#e8873c"/>
<rect x="546.7" y="502" width="26" height="22" fill="#fff" stroke="#dcdcdc" stroke-width="1"/><clipPath id="ci2"><rect x="547.7" y="503" width="24" height="20"/></clipPath><g clip-path="url(#ci2)"><circle cx="549" cy="527" r="16" fill="#3aa66d"/></g><circle cx="566" cy="507.3" r="2.4" fill="#e8873c"/><circle cx="568.8" cy="519.3" r="6.600" fill="#fff"/><circle cx="568.8" cy="519.3" r="5.800" fill="#f4fafc" stroke="#74aec4" stroke-width="1"/><path d="M563 519.3 h11.600 M568.8 513.5 v11.6 M564.6 515.8 q4.2 2.2 8.4 0 M564.6 522.8 q4.2 -2.2 8.4 0" stroke="#74aec4" stroke-width="0.9" fill="none"/>
<g stroke="#6aa6bc" stroke-width="1" fill="none"><circle cx="623.8" cy="511.3" r="13.3" fill="#fbfdfe"/><path d="M623.8 498 v26.6 M610.5 511.3 h26.6 M613.5 503.200 q10.3 4.6 20.6 0"/></g><rect x="619.5" y="514.5" width="22.5" height="12" rx="6" fill="#f5f5f5"/><g stroke="#3a3a3a" stroke-width="1.800" fill="none"><path d="M629 517.2 h-3.4 a3.4 3.4 0 0 0 0 6.800 h3.4 M632.6 517.2 h3.4 a3.4 3.4 0 0 1 0 6.800 h-3.4 M627.3 520.600 h7"/></g>
<rect x="661" y="495.5" width="54.5" height="64.500" rx="2" fill="#f1e2e2" stroke="#e6cfcf" stroke-width="1"/>
<path d="M680.7 500.6 H692.3000000000001 L697.8000000000001 506.1 V523.4 Q697.8000000000001 524.9 696.3000000000001 524.9 H680.7 Q679.2 524.9 679.2 523.4 V502.1 Q679.2 500.6 680.7 500.6 Z" fill="#ffffff" stroke="#dadada" stroke-width="1" stroke-linejoin="round"/><path d="M692.3000000000001 500.6 L697.8000000000001 506.1 H692.3000000000001 Z" fill="#a0a0a0"/>
<rect x="682" y="504" width="6.500" height="3" fill="none" stroke="#5a6a78" stroke-width="0.9" stroke-dasharray="1.6 1"/><rect x="681.500" y="510.3" width="14" height="3.600" fill="#cfe6ee" stroke="#4a9ab8" stroke-width="0.9"/><rect x="682" y="517.3" width="13" height="3.200" fill="none" stroke="#5a6a78" stroke-width="0.9" stroke-dasharray="1.6 1"/>
<path d="M753.5 500.3 H765.6 L771.6 506.3 V523.7 Q771.6 525.2 770.1 525.2 H753.5 Q752 525.2 752 523.7 V501.8 Q752 500.3 753.5 500.3 Z" fill="#ffffff" stroke="#e4e4e4" stroke-width="1" stroke-linejoin="round"/><path d="M765.6 500.3 L771.6 506.3 H765.6 Z" fill="#b9a9a6"/>
<rect x="752.6" y="503.200" width="14.500" height="6.800" rx="2" fill="#f8d3a4" stroke="#eba45e" stroke-width="1"/><rect x="752.6" y="516.6" width="16.5" height="6.800" rx="2" fill="#f8d3a4" stroke="#eba45e" stroke-width="1"/>
<path d="M776.5 550.0 h7.600 l-3.800 3.800 z" fill="#555"/>
<path d="M823.8 500.5 H835.3 L841.3 506.5 V523.5 Q841.3 525.0 839.8 525.0 H823.8 Q822.3 525.0 822.3 523.5 V502.0 Q822.3 500.5 823.8 500.5 Z" fill="#ffffff" stroke="#dcdcdc" stroke-width="1" stroke-linejoin="round"/><path d="M835.3 500.5 L841.3 506.5 H835.3 Z" fill="#a8a8a8"/>
<text x="832" y="523" font-size="10" fill="#1c6aa8" text-anchor="middle" font-weight="bold">1</text>
<path d="M853.5 550.0 h7.600 l-3.800 3.800 z" fill="#555"/>
<path d="M897.5 500.5 H908.0 L914.5 507.0 V523.5 Q914.5 525.0 913.0 525.0 H897.5 Q896 525.0 896 523.5 V502.0 Q896 500.5 897.5 500.5 Z" fill="#ffffff" stroke="#9a9a9a" stroke-width="1" stroke-linejoin="round"/><path d="M908.0 500.5 L914.5 507.0 H908.0 Z" fill="#3a3a3a"/>
<circle cx="912.6" cy="519.5" r="6.6" fill="#fff"/><circle cx="912.6" cy="519.5" r="5.6" fill="#3aa66d"/><path d="M909.3000000000001 519.5 h6.6 M912.6 516.2 v6.6" stroke="#fff" stroke-width="1.5" fill="none"/>
<path d="M920.7 550.0 h7.600 l-3.800 3.800 z" fill="#555"/>
<path d="M950.5 500.5 H961.3 L967.8 507.0 V523.5 Q967.8 525.0 966.3 525.0 H950.5 Q949 525.0 949 523.5 V502.0 Q949 500.5 950.5 500.5 Z" fill="#ffffff" stroke="#9a9a9a" stroke-width="1" stroke-linejoin="round"/><path d="M961.3 500.5 L967.8 507.0 H961.3 Z" fill="#3a3a3a"/>
<path d="M958.800 515 h3.400 a3.800 3.800 0 1 1 -2.600 6.600" fill="none" stroke="#1f6fb4" stroke-width="1.200"/><path d="M959.800 512.400 l-2.800 2.600 l2.800 2.600" fill="none" stroke="#1f6fb4" stroke-width="1.200"/>
<path d="M955.0 549.0 h7.600 l-3.800 3.800 z" fill="#555"/>
<path d="M999.0 500.5 H1010.0 L1016.5 507.0 V523.5 Q1016.5 525.0 1015.0 525.0 H999.0 Q997.5 525.0 997.5 523.5 V502.0 Q997.5 500.5 999.0 500.5 Z" fill="#ffffff" stroke="#9a9a9a" stroke-width="1" stroke-linejoin="round"/><path d="M1010.0 500.5 L1016.5 507.0 H1010.0 Z" fill="#3a3a3a"/>
<path d="M1009 518 h9 M1014.6 514.5 l3.600 3.500 l-3.600 3.500" fill="none" stroke="#d8224e" stroke-width="1.4"/>
<path d="M1049.3 499.7 H1057.5 L1062.5 504.7 V518.2 Q1062.5 519.7 1061.0 519.7 H1049.3 Q1047.8 519.7 1047.8 518.2 V501.2 Q1047.8 499.7 1049.3 499.7 Z" fill="#ffffff" stroke="#9a9a9a" stroke-width="1" stroke-linejoin="round"/><path d="M1057.5 499.7 L1062.5 504.7 H1057.5 Z" fill="#3a3a3a"/>
<path d="M1051.500 511.500 l4.600 4.600 M1052.600 516.300 h3.700 v-3.700" fill="none" stroke="#1f6fb4" stroke-width="1.3"/>
<path d="M1061.1 507.5 H1069.6 L1074.6 512.5 V526.0 Q1074.6 527.5 1073.1 527.5 H1061.1 Q1059.6 527.5 1059.6 526.0 V509.0 Q1059.6 507.5 1061.1 507.5 Z" fill="#ffffff" stroke="#9a9a9a" stroke-width="1" stroke-linejoin="round"/><path d="M1069.6 507.5 L1074.6 512.5 H1069.6 Z" fill="#3a3a3a"/>
<path d="M1069.500 523.500 l-4.600 -4.600 M1068.500 518.700 h-3.700 v3.700" fill="none" stroke="#1f6fb4" stroke-width="1.3"/>
<rect x="1123.2" y="500.6" width="19" height="24.300" rx="2" fill="#fff" stroke="#9a9a9a" stroke-width="1"/><path d="M1127.500 500.600 h6.200 v9.600 l-3.100 -2.600 l-3.100 2.600 z" fill="#d8224e"/>
<circle cx="1139.6" cy="520.5" r="6.6" fill="#fff"/><circle cx="1139.6" cy="520.5" r="5.6" fill="#3aa66d"/><path d="M1136.3 520.5 h6.6 M1139.6 517.2 v6.6" stroke="#fff" stroke-width="1.5" fill="none"/>
<path d="M1131.0 549.0 h7.600 l-3.800 3.800 z" fill="#555"/>
<path d="M1204.9 503.8 H1212.8000000000002 L1217.8000000000002 508.8 V520.1 Q1217.8000000000002 521.6 1216.3000000000002 521.6 H1204.9 Q1203.4 521.6 1203.4 520.1 V505.3 Q1203.4 503.8 1204.9 503.8 Z" fill="#ffffff" stroke="#9a9a9a" stroke-width="1" stroke-linejoin="round"/><path d="M1212.8000000000002 503.8 L1217.8000000000002 508.8 H1212.8000000000002 Z" fill="#3a3a3a"/>
<g transform="translate(1199.2 502.6) scale(1 1)"><path d="M-2.200 -2.200 L1.600 1.600 M-1.400 2 H2 V-1.400" fill="none" stroke="#1d6aa4" stroke-width="1.300"/></g><g transform="translate(1221.2 502.6) scale(-1 1)"><path d="M-2.200 -2.200 L1.600 1.600 M-1.400 2 H2 V-1.400" fill="none" stroke="#1d6aa4" stroke-width="1.300"/></g><g transform="translate(1199.2 523.7) scale(1 -1)"><path d="M-2.200 -2.200 L1.600 1.600 M-1.400 2 H2 V-1.400" fill="none" stroke="#1d6aa4" stroke-width="1.300"/></g><g transform="translate(1221.2 523.7) scale(-1 -1)"><path d="M-2.200 -2.200 L1.600 1.600 M-1.400 2 H2 V-1.400" fill="none" stroke="#1d6aa4" stroke-width="1.300"/></g>
<g transform="translate(1278.500 513) rotate(45)"><path d="M-4.500 6 v-12.500 a4.500 4.500 0 0 1 9 0 v15 a2.800 2.800 0 0 1 -5.600 0 v-12.500 a1 1 0 0 1 2.200 0 v10" fill="#d6ecf8" fill-opacity="0.8" stroke="#2a7fb6" stroke-width="1.500" stroke-linecap="round"/></g>
<text x="77.5" y="544" font-size="11" fill="#444444" textLength="25.92" lengthAdjust="spacingAndGlyphs">Hand</text>
<text x="237.9" y="544" font-size="11" fill="#444444" textLength="27.31" lengthAdjust="spacingAndGlyphs">Share</text>
<text x="282.7" y="544" font-size="11" fill="#444444" textLength="45.66" lengthAdjust="spacingAndGlyphs">Snapshot</text>
<text x="360.7" y="544" font-size="11" fill="#444444" textLength="24.11" lengthAdjust="spacingAndGlyphs">Read</text>
<text x="358.7" y="558.7" font-size="11" fill="#444444" textLength="28.72" lengthAdjust="spacingAndGlyphs">Mode</text>
<text x="425.0" y="544" font-size="11" fill="#444444" textLength="19.92" lengthAdjust="spacingAndGlyphs">Add</text>
<text x="425.9" y="556.5" font-size="11" fill="#444444" textLength="18.95" lengthAdjust="spacingAndGlyphs">Text</text>
<text x="487.7" y="544" font-size="11" fill="#444444" textLength="19.52" lengthAdjust="spacingAndGlyphs">Add</text>
<text x="481.18" y="556.5" font-size="11" fill="#444444" textLength="31.24" lengthAdjust="spacingAndGlyphs">Image</text>
<text x="551.9" y="544" font-size="11" fill="#444444" textLength="19.52" lengthAdjust="spacingAndGlyphs">Add</text>
<text x="528.5" y="556.5" font-size="11" fill="#444444" textLength="66.52" lengthAdjust="spacingAndGlyphs">Online Image</text>
<text x="616.0" y="544" font-size="11" fill="#444444" textLength="19.52" lengthAdjust="spacingAndGlyphs">Add</text>
<text x="616.0" y="556.5" font-size="11" fill="#444444" textLength="18.54" lengthAdjust="spacingAndGlyphs">Link</text>
<text x="666.3" y="544" font-size="11" fill="#444444" textLength="45.06" lengthAdjust="spacingAndGlyphs">Highlight</text>
<text x="670.0" y="556.5" font-size="11" fill="#444444" textLength="36.51" lengthAdjust="spacingAndGlyphs">Objects</text>
<text x="733.9" y="544" font-size="11" fill="#444444" textLength="56.92" lengthAdjust="spacingAndGlyphs">Header and</text>
<text x="740.5" y="556.5" font-size="11" fill="#444444" textLength="30.87" lengthAdjust="spacingAndGlyphs">Footer</text>
<text x="820.9" y="544" font-size="11" fill="#444444" textLength="23.31" lengthAdjust="spacingAndGlyphs">Page</text>
<text x="804.0" y="556.5" font-size="11" fill="#444444" textLength="44.11" lengthAdjust="spacingAndGlyphs">Numbers</text>
<text x="893.69" y="544" font-size="11" fill="#444444" textLength="27.77" lengthAdjust="spacingAndGlyphs">Insert</text>
<text x="887.8" y="556.5" font-size="11" fill="#444444" textLength="27.66" lengthAdjust="spacingAndGlyphs">Pages</text>
<text x="943.6" y="544" font-size="11" fill="#444444" textLength="31.01" lengthAdjust="spacingAndGlyphs">Rotate</text>
<text x="992.3" y="544" font-size="11" fill="#444444" textLength="33.05" lengthAdjust="spacingAndGlyphs">Extract</text>
<text x="994.4" y="556.5" font-size="11" fill="#444444" textLength="27.85" lengthAdjust="spacingAndGlyphs">Pages</text>
<text x="1039.5" y="544" font-size="11" fill="#444444" textLength="44.52" lengthAdjust="spacingAndGlyphs">Combine</text>
<text x="1051.3" y="556.5" font-size="11" fill="#444444" textLength="20.36" lengthAdjust="spacingAndGlyphs">Files</text>
<text x="1110.2" y="544" font-size="11" fill="#444444" textLength="48.91" lengthAdjust="spacingAndGlyphs">Bookmark</text>
<text x="1185.5" y="544" font-size="11" fill="#444444" textLength="49.11" lengthAdjust="spacingAndGlyphs">Compress</text>
<text x="1263.2" y="544" font-size="11" fill="#444444" textLength="31.32" lengthAdjust="spacingAndGlyphs">Attach</text>
<text x="1270.7" y="556.5" font-size="11" fill="#444444" textLength="16.01" lengthAdjust="spacingAndGlyphs">File</text>
</g>
<rect x="113" y="427" width="116" height="156" rx="17" fill="#f0b4b4" opacity="0.55" filter="url(#glow2)"/>
<rect x="114" y="426" width="114.500" height="155.500" rx="16" fill="#fdfcfc"/>
<rect x="124.700" y="434.800" width="92.600" height="135.800" rx="8" fill="#f4e4e4" stroke="#c9474f" stroke-width="1.500"/>
<rect x="148.700" y="454" width="36.500" height="36" fill="#fdfdfd" stroke="#8d8d8d" stroke-width="1.200"/>
<path d="M154 463.500 h23.500 M154 469.300 h23" stroke="#3a9bd6" stroke-width="1.400"/><rect x="154.300" y="474" width="7.200" height="7.200" fill="#2f9bd8"/>
<g transform="translate(163.300 496.800) rotate(-40.500)"><path d="M-1 0 L8 -5.500 H40 a3.500 3.500 0 0 1 3.500 3.500 v4 a3.500 3.500 0 0 1 -3.500 3.500 H8 Z" fill="#fbf6f6" stroke="#fbf6f6" stroke-width="1.600" stroke-linejoin="round"/></g>
<circle cx="148.7" cy="454" r="4.500" fill="#e0193e"/>
<circle cx="185.2" cy="454" r="4.500" fill="#e0193e"/>
<circle cx="148.7" cy="490" r="4.500" fill="#e0193e"/>
<circle cx="185.2" cy="490" r="4.500" fill="#e0193e"/>
<g transform="translate(163.300 496.800) rotate(-40.500)"><path d="M0 0 L9 -4.500 H31 V4.500 H9 Z" fill="#1668b2"/><path d="M33 -4.500 H39.500 a3.200 3.200 0 0 1 3.200 3.200 v2.600 a3.200 3.200 0 0 1 -3.200 3.200 H33 Z" fill="#1668b2"/></g>
<text x="169.5" y="536.5" font-size="22.6" fill="#3a3a3a" text-anchor="middle">Edit</text>
<rect x="1139" y="915" width="240" height="460" rx="16" fill="#f0b0b0" opacity="0.480" filter="url(#glow2)"/>
<rect x="1141" y="916.5" width="236.5" height="456" fill="#fdfcfc" rx="14"/>
<rect x="1149.2" y="926.5" width="217.8" height="433" fill="#fcfcfc" rx="12" stroke="#cc8082" stroke-width="1.15"/>
<text x="1165" y="946.5" font-size="12.3" fill="#b17478" text-anchor="start" textLength="55.5" lengthAdjust="spacingAndGlyphs">Properties</text>
<path d="M1347.300 936 l6.200 6.200 M1353.500 936 l-6.200 6.200" stroke="#555" stroke-width="1"/>
<path d="M1158.500 973 v4.200 h-4.200 z" fill="#555"/>
<text x="1165" y="978.6" font-size="9.2" fill="#8b3a3e" text-anchor="start">Text</text>
<rect x="1165" y="992.5" width="194.5" height="17.5" fill="#ffffff" rx="1.5" stroke="#d0d0d0" stroke-width="1"/>
<path d="M1271.500 992.500 v17.500 M1320 992.500 v17.500" stroke="#d0d0d0" stroke-width="1"/>
<rect x="1171" y="996.2" width="51.5" height="10.5" fill="#a9cdf0"/>
<text x="1171.3" y="1004.8" font-size="8.3" fill="#1d4f8f" text-anchor="start" textLength="51" lengthAdjust="spacingAndGlyphs">Arial Regular</text>
<path d="M1262.900 1000 h5.200 l-2.600 2.800 z" fill="#444"/>
<text x="1277.5" y="1004.8" font-size="8.3" fill="#444" text-anchor="start">11.04</text>
<path d="M1311.600 1000 h5.200 l-2.600 2.800 z" fill="#444"/>
<path d="M1325.500 1001.200 h9 M1345.500 1001.200 h9 M1350 996.700 v9" stroke="#555" stroke-width="1.100"/>
<rect x="1165.2" y="1016.5" width="18.3" height="18" fill="#f1e2e2" rx="2" stroke="#e0c6c6" stroke-width="1"/>
<text x="1174.3" y="1029.5" font-size="10.5" fill="#333" text-anchor="middle" font-weight="bold">B</text>
<text x="1215" y="1029.5" font-size="10" fill="#444" text-anchor="middle" font-style="italic">I</text>
<text x="1254.5" y="1029.5" font-size="10.5" fill="#555" text-anchor="middle">X</text>
<text x="1259.8" y="1031" font-size="5.5" fill="#555" text-anchor="middle">2</text>
<text x="1295.5" y="1029.5" font-size="10.5" fill="#555" text-anchor="middle">X</text>
<text x="1300.8" y="1025" font-size="5.5" fill="#555" text-anchor="middle">2</text>
<text x="1338.5" y="1028" font-size="13" fill="#333" text-anchor="middle">a</text>
<path d="M1332.500 1031.800 h12.500" stroke="#222" stroke-width="1.800"/><path d="M1351.600 1025 h5 l-2.500 2.700 z" fill="#444"/>
<text x="1165" y="1054" font-size="8.8" fill="#555555" text-anchor="start">Alignment</text>
<line x1="1216" y1="1050.5" x2="1359.5" y2="1050.5" stroke="#d4d4d4" stroke-width="1"/>
<rect x="1174.5" y="1062" width="18" height="18" fill="#f1e2e2" rx="2" stroke="#e0c6c6" stroke-width="1"/>
<path d="M1177.0 1064.7 h13" stroke="#8a8a8a" stroke-width="0.900"/><path d="M1177.0 1067.2 h8" stroke="#8a8a8a" stroke-width="0.900"/><path d="M1177.0 1069.7 h13" stroke="#8a8a8a" stroke-width="0.900"/><path d="M1177.0 1072.2 h8" stroke="#8a8a8a" stroke-width="0.900"/><path d="M1177.0 1074.7 h13" stroke="#8a8a8a" stroke-width="0.900"/><path d="M1177.0 1077.2 h8" stroke="#8a8a8a" stroke-width="0.900"/>
<path d="M1214.3 1064.7 h13" stroke="#9a9a9a" stroke-width="0.900"/><path d="M1216.8 1067.2 h8" stroke="#9a9a9a" stroke-width="0.900"/><path d="M1214.3 1069.7 h13" stroke="#9a9a9a" stroke-width="0.900"/><path d="M1216.8 1072.2 h8" stroke="#9a9a9a" stroke-width="0.900"/><path d="M1214.3 1074.7 h13" stroke="#9a9a9a" stroke-width="0.900"/><path d="M1216.8 1077.2 h8" stroke="#9a9a9a" stroke-width="0.900"/>
<path d="M1250.9 1064.7 h13" stroke="#9a9a9a" stroke-width="0.900"/><path d="M1255.9 1067.2 h8" stroke="#9a9a9a" stroke-width="0.900"/><path d="M1250.9 1069.7 h13" stroke="#9a9a9a" stroke-width="0.900"/><path d="M1255.9 1072.2 h8" stroke="#9a9a9a" stroke-width="0.900"/><path d="M1250.9 1074.7 h13" stroke="#9a9a9a" stroke-width="0.900"/><path d="M1255.9 1077.2 h8" stroke="#9a9a9a" stroke-width="0.900"/>
<text x="1165" y="1109" font-size="8.8" fill="#555555" text-anchor="start">Spacing</text>
<line x1="1206" y1="1105.5" x2="1359.5" y2="1105.5" stroke="#d4d4d4" stroke-width="1"/>
<path d="M1168 1120 v13 M1166 1122 l2 -2.300 l2 2.300 M1166 1131 l2 2.300 l2 -2.300" stroke="#2d7fa8" stroke-width="1" fill="none"/><path d="M1172.500 1123 h8.500 M1172.500 1126.500 h8.500 M1172.500 1130 h8.500" stroke="#555" stroke-width="1.100"/>
<rect x="1190" y="1118" width="60" height="17" fill="#ffffff" rx="1.5" stroke="#d0d0d0" stroke-width="1"/><text x="1196" y="1129.5" font-size="8.3" fill="#444" text-anchor="start">1.2</text><path d="M1240.9 1125.3 h5.200 l-2.600 2.800 z" fill="#444"/>
<path d="M1265 1120 v13 M1263 1122 l2 -2.300 l2 2.300 M1263 1131 l2 2.300 l2 -2.300" stroke="#2d7fa8" stroke-width="1" fill="none"/><path d="M1269.500 1121.200 h9 M1269.500 1124.700 h9 M1269.500 1128.700 h9 M1269.500 1132.200 h9" stroke="#555" stroke-width="1.100"/>
<rect x="1287.3" y="1118" width="60" height="17" fill="#ffffff" rx="1.5" stroke="#d0d0d0" stroke-width="1"/><text x="1293.3" y="1129.5" font-size="8.3" fill="#444" text-anchor="start">0</text><path d="M1338.2 1125.3 h5.200 l-2.600 2.800 z" fill="#444"/>
<text x="1173" y="1163" font-size="10.5" fill="#555" text-anchor="middle" textLength="14" lengthAdjust="spacingAndGlyphs">AV</text>
<path d="M1166 1166.500 h14 M1167.800 1165 l-1.800 1.500 l1.800 1.500 M1178.200 1165 l1.800 1.500 l-1.800 1.500" stroke="#2d7fa8" stroke-width="0.900" fill="none"/>
<rect x="1190" y="1151.5" width="60" height="17" fill="#ffffff" rx="1.5" stroke="#d0d0d0" stroke-width="1"/><text x="1196" y="1163.0" font-size="8.3" fill="#444" text-anchor="start">0</text><path d="M1240.9 1158.8 h5.200 l-2.600 2.800 z" fill="#444"/>
<text x="1270" y="1163" font-size="11.5" fill="#555" text-anchor="middle">A</text>
<path d="M1263.500 1166.500 h13.500 M1265.300 1165 l-1.800 1.500 l1.800 1.500 M1275.200 1165 l1.800 1.500 l-1.800 1.500" stroke="#2d7fa8" stroke-width="0.900" fill="none"/>
<rect x="1287.3" y="1151.5" width="60" height="17" fill="#ffffff" rx="1.5" stroke="#d0d0d0" stroke-width="1"/><text x="1293.3" y="1163.0" font-size="8.3" fill="#444" text-anchor="start">100%</text><path d="M1338.2 1158.8 h5.200 l-2.600 2.800 z" fill="#444"/>
<path d="M1158.500 1207.500 v4.200 h-4.200 z" fill="#555"/>
<text x="1165" y="1213.3" font-size="9.2" fill="#9a4a4e" text-anchor="start">Objects</text>
<text x="1165" y="1236.7" font-size="8.8" fill="#555555" text-anchor="start">Rotation</text>
<line x1="1208" y1="1233.4" x2="1359.5" y2="1233.4" stroke="#d4d4d4" stroke-width="1"/>
<path d="M1189.29 1252.10 A3.8 3.8 0 1 0 1188.90 1256.45" fill="none" stroke="#4b8fc2" stroke-width="0.900"/><path d="M1187.70 1253.1 L1191.90 1253.1 L1189.80 1255.9 Z" fill="#1f4f7c"/>
<path d="M1232.51 1252.10 A3.8 3.8 0 1 1 1232.90 1256.45" fill="none" stroke="#4b8fc2" stroke-width="0.900"/><path d="M1234.10 1253.1 L1229.90 1253.1 L1232.00 1255.9 Z" fill="#1f4f7c"/>
<path d="M1279 1248.500 v11 h-4.800 z" fill="#cfcfcf"/><path d="M1280.800 1248.500 v11 h4.800 z" fill="#a8a8a8"/>
<path d="M1320 1253.300 h11 l-11 -4.800 z" fill="#cfcfcf"/><path d="M1320 1255 h11 l-11 4.800 z" fill="#a8a8a8"/>
<text x="1165" y="1291.5" font-size="8.8" fill="#555555" text-anchor="start">Arrange</text>
<line x1="1206" y1="1288" x2="1359.5" y2="1288" stroke="#d4d4d4" stroke-width="1"/>
<path d="M1181.6 1308.5 l6 3 l6 -3" fill="none" stroke="#2e8b62" stroke-width="1"/><path d="M1181.6 1306.0 l6 -3 l6 3 l-6 3 z" fill="#2e8b62"/><path d="M1181.6 1311.0 l6 3 l6 -3" fill="none" stroke="#5a5a5a" stroke-width="0.900"/>
<path d="M1228 1306.0 l6 -3 l6 3 l-6 3 z" fill="#fff" stroke="#5a5a5a" stroke-width="0.900"/><path d="M1228 1309.0 l6 3 l6 -3 l-2.500 -1.200 l-3.500 1.800 l-3.500 -1.800 z M1228 1309.0 l6 3.800 l6 -3.800 l-6 6 z" fill="#2e8b62"/>
<path d="M1274 1306.0 l6 -3 l6 3 l-6 3 z" fill="#2e8b62"/><path d="M1274 1308.5 l6 3 l6 -3" fill="none" stroke="#2e8b62" stroke-width="1.200"/><path d="M1274 1311.0 l6 3 l6 -3" fill="none" stroke="#5a5a5a" stroke-width="0.900"/>
<path d="M1320.5 1306.0 l6 -3 l6 3 l-6 3 z" fill="#fff" stroke="#5a5a5a" stroke-width="0.900"/><path d="M1320.5 1308.5 l6 3 l6 -3" fill="none" stroke="#2e8b62" stroke-width="1.200"/><path d="M1320.5 1311.0 l6 3 l6 -3" fill="none" stroke="#2e8b62" stroke-width="1.200"/>
<rect x="1284" y="1337" width="75.5" height="17" fill="#fdfdfd" rx="1.5" stroke="#d6d6d6" stroke-width="1"/>
<text x="1321.7" y="1348.7" font-size="7.8" fill="#bdbdbd" text-anchor="middle">Replace Picture...</text>
</svg>
</body></html>
